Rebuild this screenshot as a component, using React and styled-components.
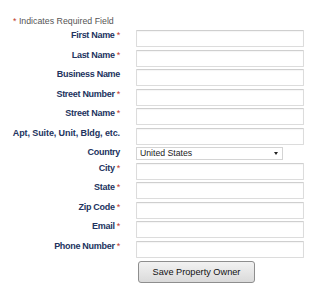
import React from 'react';
import styled, { createGlobalStyle } from 'styled-components';

const GlobalStyle = createGlobalStyle`
  html, body {
    margin: 0;
    padding: 0;
    background: #fff;
  }
  body {
    font-family: "Liberation Sans", Arial, sans-serif;
  }
`;

const fields = [
  { label: 'First Name', required: true },
  { label: 'Last Name', required: true },
  { label: 'Business Name' },
  { label: 'Street Number', required: true },
  { label: 'Street Name', required: true },
  { label: 'Apt, Suite, Unit, Bldg, etc.', light: true },
  { label: 'Country', select: true },
  { label: 'City', required: true },
  { label: 'State', required: true },
  { label: 'Zip Code', required: true },
  { label: 'Email', required: true },
  { label: 'Phone Number', required: true },
];

function App() {
  return (
    <Page>
      <GlobalStyle />
      <Notice>
        <Star>*</Star> Indicates Required Field
      </Notice>
      <Form>
        {fields.map((f) => (
          <React.Fragment key={f.label}>
            <Label $light={f.light}>
              {f.label}
              {f.required && <Star> *</Star>}
            </Label>
            {f.select ? (
              <SelectWrap>
                <Select defaultValue="US">
                  <option value="US">United States</option>
                </Select>
              </SelectWrap>
            ) : (
              <Input type="text" />
            )}
          </React.Fragment>
        ))}
        <span />
        <Actions>
          <Button type="button">Save Property Owner</Button>
        </Actions>
      </Form>
    </Page>
  );
}

export default App;

const Page = styled.div`
  width: 311px;
  height: 294px;
  padding-top: 16px;
  box-sizing: border-box;
`;

const Notice = styled.div`
  padding-left: 13px;
  font-size: 8.8px;
  line-height: 11px;
  color: #555;
  margin-bottom: 3px;
`;

const Star = styled.span`
  color: #c0392b;
  font-weight: normal;
`;

const Form = styled.div`
  display: grid;
  grid-template-columns: 120px 168px;
  column-gap: 16px;
  row-gap: 2.5px;
  align-items: start;
`;

const Label = styled.label`
  text-align: right;
  font-size: 9px;
  line-height: 11px;
  font-weight: ${(p) => (p.$light ? 600 : 700)};
  letter-spacing: ${(p) => (p.$light ? '-0.1px' : '-0.3px')};
  color: #22335e;
  white-space: nowrap;
`;

const Input = styled.input`
  box-sizing: border-box;
  width: 168px;
  height: 17px;
  margin: 0;
  border: 1px solid #dcdcdc;
  border-top-color: #cfcfcf;
  border-radius: 1px;
  background: #fff;
  box-shadow: inset 0 1px 1px rgba(0, 0, 0, 0.04);
  outline: none;
`;

const SelectWrap = styled.div`
  position: relative;
  width: 147px;
  height: 13px;

  &::after {
    content: '';
    position: absolute;
    right: 5px;
    top: 5px;
    border-left: 2.5px solid transparent;
    border-right: 2.5px solid transparent;
    border-top: 3px solid #222;
  }
`;

const Select = styled.select`
  appearance: none;
  box-sizing: border-box;
  display: block;
  width: 100%;
  height: 13px;
  margin: 0;
  padding: 0 0 1px 3px;
  border: 1px solid #d4d4d4;
  border-radius: 0;
  background: #fff;
  font-family: "Liberation Sans", Arial, sans-serif;
  font-size: 8.7px;
  line-height: 10px;
  color: #222;
  outline: none;
`;

const Actions = styled.div`
  padding: 0.5px 0 0 2px;
`;

const Button = styled.button`
  box-sizing: border-box;
  width: 117px;
  height: 22px;
  margin: 0;
  border: 1px solid #8e8e8e;
  border-radius: 3px;
  background: linear-gradient(#f2f2f2, #dadada);
  font-family: "Liberation Sans", Arial, sans-serif;
  font-size: 9.2px;
  color: #111;
  cursor: pointer;
`;
